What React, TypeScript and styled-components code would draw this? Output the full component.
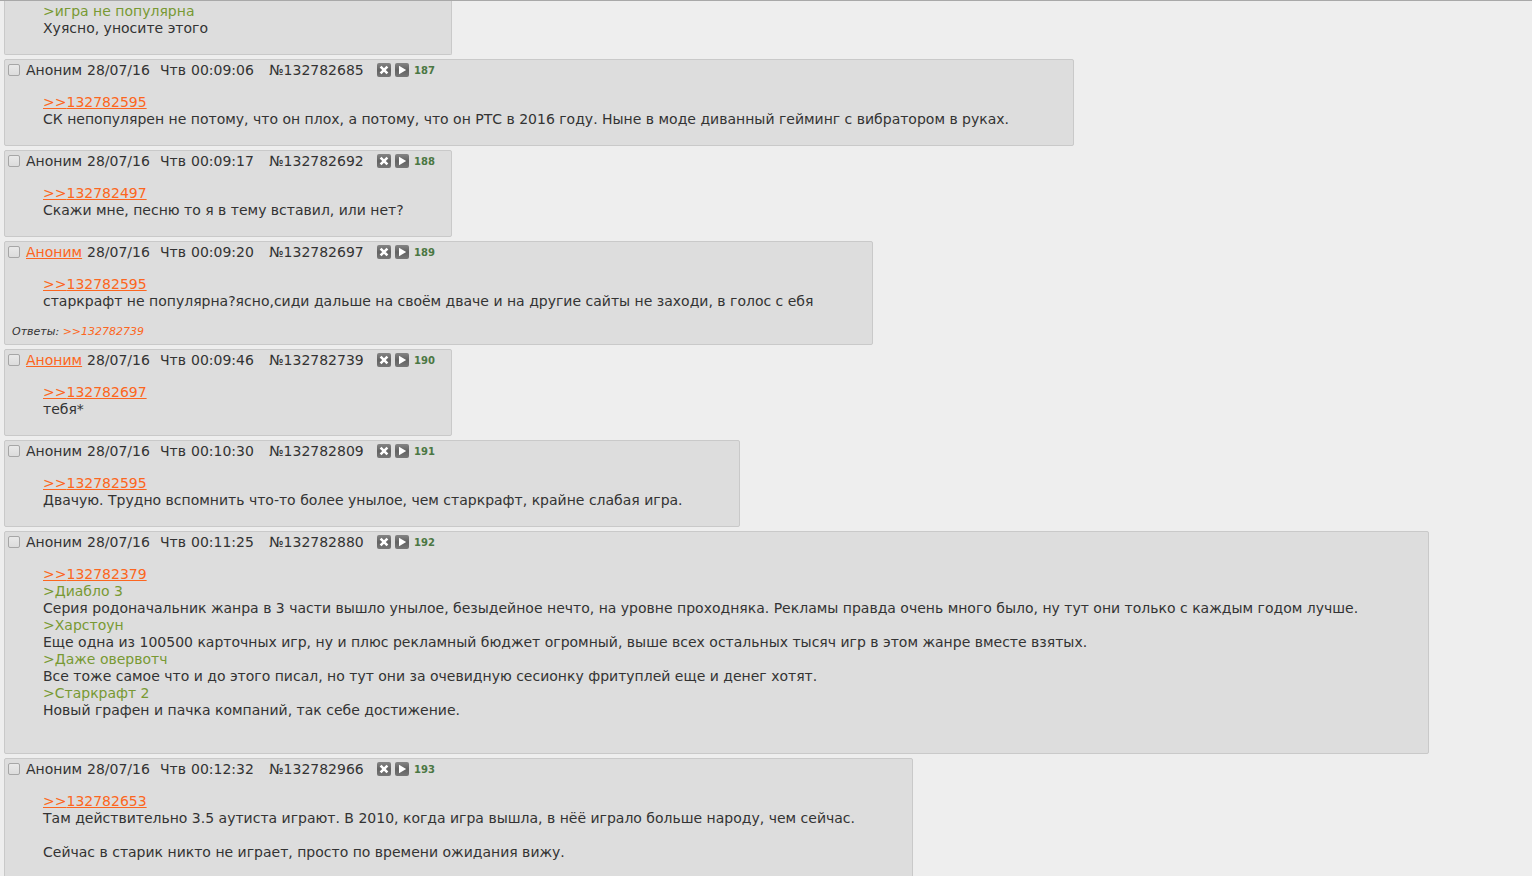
import React from "react";
import styled, { createGlobalStyle } from "styled-components";

const GlobalStyle = createGlobalStyle`
  body {
    margin: 0;
    background: #eee;
    color: #333;
    font: 14px/17px Verdana, "DejaVu Sans", sans-serif;
  }
`;

const Thread = styled.main`
  box-sizing: border-box;
  height: 100vh;
  overflow: hidden;
  display: flex;
  flex-direction: column;
  align-items: flex-start;
  gap: 4px;
  padding: 0 4px;
  border-top: 1px solid #a8a8a8;
`;

const PostBox = styled.article<{ $continued?: boolean; $minWidth?: number }>`
  box-sizing: border-box;
  flex: none;
  min-width: min(${(p) => p.$minWidth ?? 448}px, 100%);
  max-width: 100%;
  padding-top: 2px;
  background: #ddd;
  border: 1px solid #c9c9c9;
  border-top-width: ${(p) => (p.$continued ? 0 : 1)}px;
  border-radius: ${(p) => (p.$continued ? "0 0 2px 2px" : "2px")};
`;

const Header = styled.header`
  display: flex;
  align-items: flex-start;
  height: 17px;
  margin-bottom: 15px;
  padding-left: 3px;
  white-space: nowrap;
`;

const Check = styled.input`
  appearance: none;
  box-sizing: border-box;
  width: 12px;
  height: 12px;
  margin: 2px 6px 0 0;
  border: 1px solid #a6a6a6;
  border-radius: 2px;
  background: linear-gradient(#e9e9e9, #dcdcdc);
  &:checked {
    background: #777;
  }
`;

const Name = styled.span`
  width: 61px;
`;

const Link = styled.a`
  color: #fc6620;
  text-decoration: underline;
`;

const Time = styled.time`
  display: grid;
  grid-template-columns: 73px 31px 78px;
`;

const PostId = styled.span`
  width: 108px;
`;

const IconButton = styled.button`
  display: block;
  width: 14px;
  height: 14px;
  margin: 1px 4px 0 0;
  padding: 0;
  border: 0;
  background: none;
  cursor: pointer;
  svg {
    display: block;
  }
`;

const Ordinal = styled.span`
  margin-left: 1px;
  color: #4b7743;
  font-size: 10px;
  font-weight: bold;
`;

const Message = styled.div`
  padding: 0 38px 17px;
`;

const Line = styled.p<{ $quote?: boolean }>`
  min-height: 17px;
  margin: 0;
  color: ${(p) => (p.$quote ? "#789933" : "inherit")};
`;

const Replies = styled.footer`
  margin-top: -2px;
  padding: 0 7px 5px;
  font-size: 11px;
  line-height: 14px;
  font-style: italic;
  a {
    text-decoration: none;
  }
`;

const IconPlate = ({ children }: { children: React.ReactNode }) => (
  <svg width="14" height="14" viewBox="0 0 14 14" aria-hidden="true">
    <defs>
      <linearGradient id="plate" x1="0" y1="0" x2="0" y2="1">
        <stop offset="0" stopColor="#858585" />
        <stop offset="0.5" stopColor="#626262" />
        <stop offset="1" stopColor="#777" />
      </linearGradient>
    </defs>
    <rect width="14" height="14" rx="2" fill="url(#plate)" />
    {children}
  </svg>
);

const HideIcon = () => (
  <IconPlate>
    <path d="M3.6 3.6l6.8 6.8M10.4 3.6l-6.8 6.8" stroke="#fff" strokeWidth="2.6" />
  </IconPlate>
);

const ReplyIcon = () => (
  <IconPlate>
    <path d="M4 2.8l7.2 4.2L4 11.2z" fill="#fff" />
  </IconPlate>
);

type Post = {
  ordinal: number;
  id: string;
  time: string;
  linkedName?: boolean;
  minWidth?: number;
  replyTo: string;
  lines: string[];
  answer?: string;
};

const posts: Post[] = [
  {
    ordinal: 187,
    id: "132782685",
    time: "00:09:06",
    minWidth: 1070,
    replyTo: "132782595",
    lines: [
      "СК непопулярен не потому, что он плох, а потому, что он РТС в 2016 году. Ныне в моде диванный гейминг с вибратором в руках.",
    ],
  },
  {
    ordinal: 188,
    id: "132782692",
    time: "00:09:17",
    replyTo: "132782497",
    lines: ["Скажи мне, песню то я в тему вставил, или нет?"],
  },
  {
    ordinal: 189,
    id: "132782697",
    time: "00:09:20",
    linkedName: true,
    minWidth: 869,
    replyTo: "132782595",
    lines: [
      "старкрафт не популярна?ясно,сиди дальше на своём дваче и на другие сайты не заходи, в голос с ебя",
    ],
    answer: "132782739",
  },
  {
    ordinal: 190,
    id: "132782739",
    time: "00:09:46",
    linkedName: true,
    replyTo: "132782697",
    lines: ["тебя*"],
  },
  {
    ordinal: 191,
    id: "132782809",
    time: "00:10:30",
    minWidth: 736,
    replyTo: "132782595",
    lines: [
      "Двачую. Трудно вспомнить что-то более унылое, чем старкрафт, крайне слабая игра.",
    ],
  },
  {
    ordinal: 192,
    id: "132782880",
    time: "00:11:25",
    minWidth: 1425,
    replyTo: "132782379",
    lines: [
      ">Диабло 3",
      "Серия родоначальник жанра в 3 части вышло унылое, безыдейное нечто, на уровне проходняка. Рекламы правда очень много было, ну тут они только с каждым годом лучше.",
      ">Харстоун",
      "Еще одна из 100500 карточных игр, ну и плюс рекламный бюджет огромный, выше всех остальных тысяч игр в этом жанре вместе взятых.",
      ">Даже овервотч",
      "Все тоже самое что и до этого писал, но тут они за очевидную сесионку фритуплей еще и денег хотят.",
      ">Старкрафт 2",
      "Новый графен и пачка компаний, так себе достижение.",
      "",
    ],
  },
  {
    ordinal: 193,
    id: "132782966",
    time: "00:12:32",
    minWidth: 909,
    replyTo: "132782653",
    lines: [
      "Там действительно 3.5 аутиста играют. В 2010, когда игра вышла, в нёё играло больше народу, чем сейчас.",
      "",
      "Сейчас в старик никто не играет, просто по времени ожидания вижу.",
    ],
  },
];

const Lines = ({ lines }: { lines: string[] }) => (
  <>
    {lines.map((line, i) => (
      <Line key={i} $quote={line.startsWith(">")}>
        {line}
      </Line>
    ))}
  </>
);

const PostView = ({ post }: { post: Post }) => (
  <PostBox id={post.id} $minWidth={post.minWidth}>
    <Header>
      <Check type="checkbox" aria-label={`Пост ${post.id}`} />
      <Name>
        {post.linkedName ? <Link href="mailto:sage">Аноним</Link> : "Аноним"}
      </Name>
      <Time>
        <span>28/07/16</span>
        <span>Чтв</span>
        <span>{post.time}</span>
      </Time>
      <PostId>№{post.id}</PostId>
      <IconButton type="button" aria-label="Скрыть">
        <HideIcon />
      </IconButton>
      <IconButton type="button" aria-label="Ответить">
        <ReplyIcon />
      </IconButton>
      <Ordinal>{post.ordinal}</Ordinal>
    </Header>
    <Message>
      <Line>
        <Link href={`#${post.replyTo}`}>&gt;&gt;{post.replyTo}</Link>
      </Line>
      <Lines lines={post.lines} />
    </Message>
    {post.answer && (
      <Replies>
        Ответы: <Link href={`#${post.answer}`}>&gt;&gt;{post.answer}</Link>
      </Replies>
    )}
  </PostBox>
);

export default function App() {
  return (
    <>
      <GlobalStyle />
      <Thread>
        <PostBox $continued>
          <Message>
            <Lines lines={[">игра не популярна", "Хуясно, уносите этого"]} />
          </Message>
        </PostBox>
        {posts.map((post) => (
          <PostView key={post.id} post={post} />
        ))}
      </Thread>
    </>
  );
}
